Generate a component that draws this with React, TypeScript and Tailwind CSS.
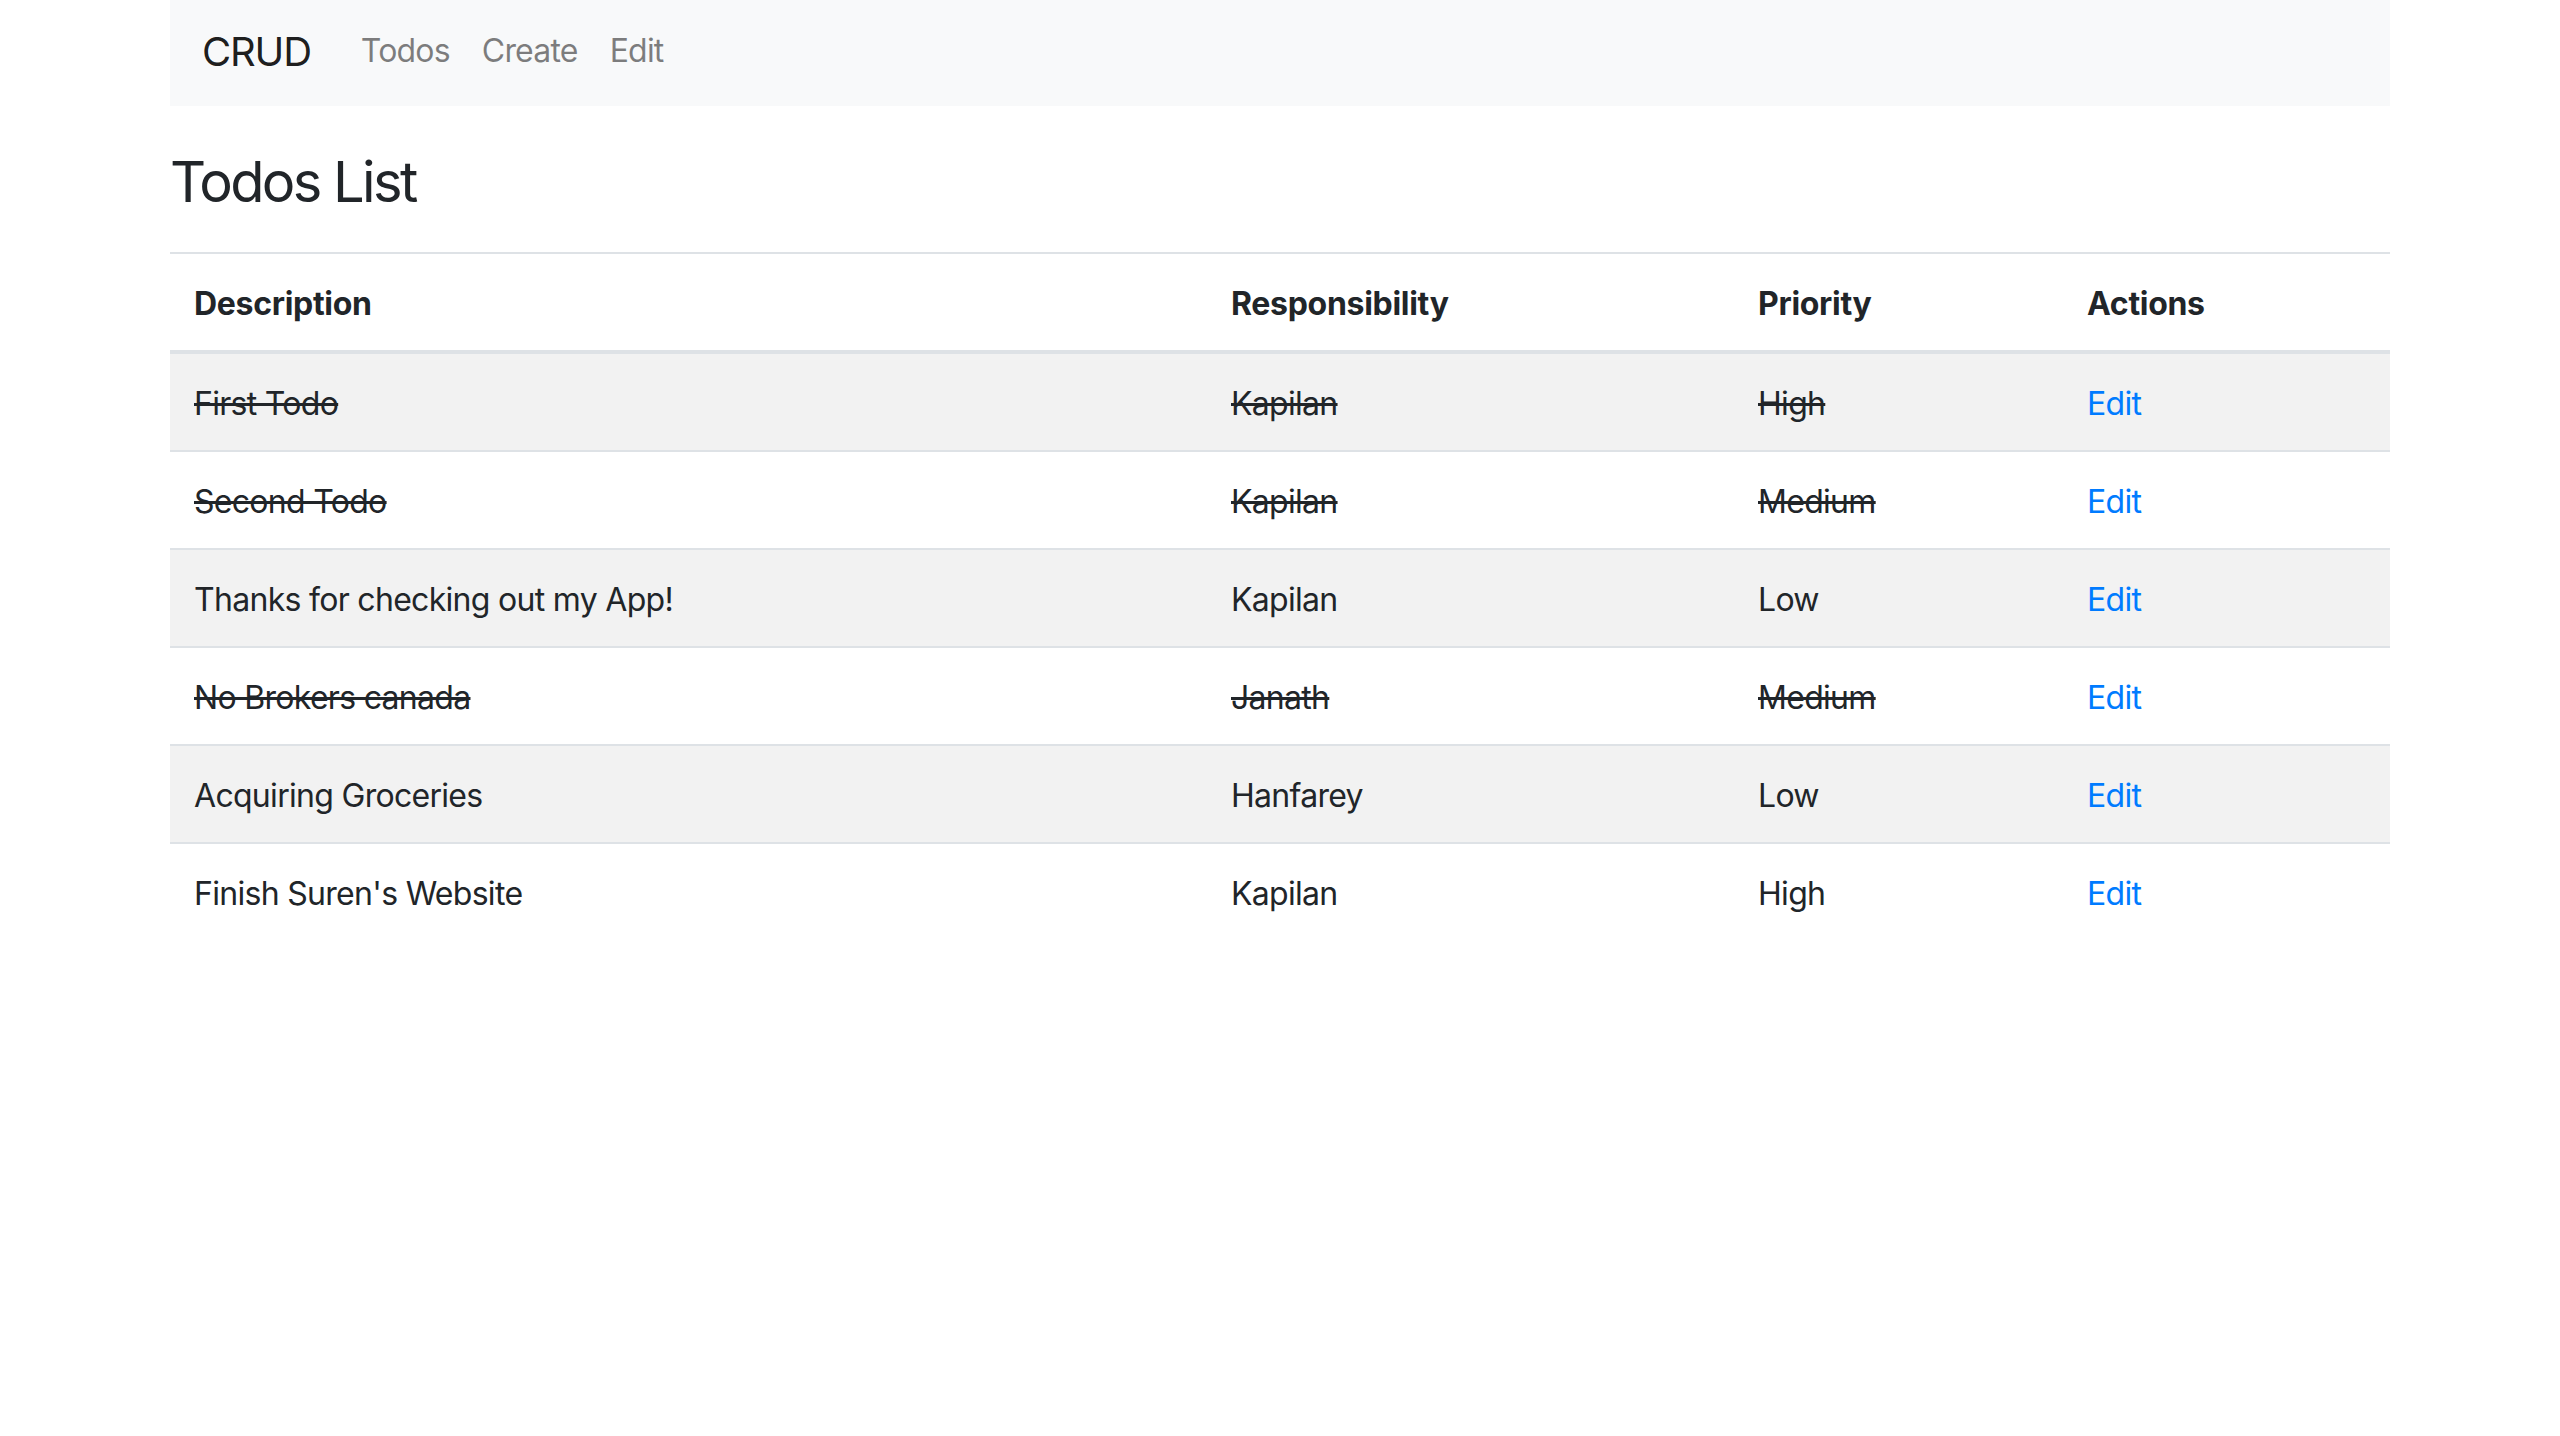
import React from 'react'

type Todo = {
  description: string
  responsible: string
  priority: string
  completed: boolean
}

const todos: Todo[] = [
  { description: 'First Todo', responsible: 'Kapilan', priority: 'High', completed: true },
  { description: 'Second Todo', responsible: 'Kapilan', priority: 'Medium', completed: true },
  { description: 'Thanks for checking out my App!', responsible: 'Kapilan', priority: 'Low', completed: false },
  { description: 'No Brokers canada', responsible: 'Janath', priority: 'Medium', completed: true },
  { description: 'Acquiring Groceries', responsible: 'Hanfarey', priority: 'Low', completed: false },
  { description: "Finish Suren's Website", responsible: 'Kapilan', priority: 'High', completed: false },
]

function Navbar() {
  return (
    <nav className="flex h-[106px] items-center bg-[#f8f9fa] px-[32px]">
      <a href="#" className="mr-[34px] mb-[2px] text-[40px] leading-[60px] tracking-[-1.2px] text-[rgba(0,0,0,0.9)]">
        CRUD
      </a>
      <ul className="mb-[5px] flex">
        {['Todos', 'Create', 'Edit'].map((label) => (
          <li key={label}>
            <a href="#" className="block px-[16px] text-[32px] leading-[48px] tracking-[-0.8px] text-[rgba(0,0,0,0.5)]">
              {label}
            </a>
          </li>
        ))}
      </ul>
    </nav>
  )
}

function TodoRow({ todo, index }: { todo: Todo; index: number }) {
  const striped = index % 2 === 0
  const border = index === 0 ? '' : 'border-t-2 border-[#dee2e6]'
  const done = todo.completed ? 'line-through' : ''
  return (
    <tr className={striped ? 'bg-[#f2f2f2]' : ''}>
      <td className={`${border} ${done} px-[24px] pt-[26px] pb-[22px]`}>{todo.description}</td>
      <td className={`${border} ${done} px-[24px] pt-[26px] pb-[22px]`}>{todo.responsible}</td>
      <td className={`${border} ${done} px-[24px] pt-[26px] pb-[22px]`}>{todo.priority}</td>
      <td className={`${border} px-[24px] pt-[26px] pb-[22px]`}>
        <a href="#" className="text-[#007bff]">Edit</a>
      </td>
    </tr>
  )
}

export default function App() {
  return (
    <div
      className="min-h-screen w-full bg-white text-[32px] leading-[48px] tracking-[-0.7px] text-[#212529]"
      style={{ fontFamily: 'Inter, "Liberation Sans", sans-serif' }}
    >
      <div className="mx-auto w-[2220px]">
        <Navbar />

        <h3 className="mt-[43px] text-[56px] font-normal leading-[67px] tracking-[-2.6px]">Todos List</h3>

        <table className="mt-[36px] w-full table-fixed border-separate border-spacing-0 text-left">
          <colgroup>
            <col className="w-[1037px]" />
            <col className="w-[527px]" />
            <col className="w-[329px]" />
            <col className="w-[327px]" />
          </colgroup>
          <thead>
            <tr>
              {['Description', 'Responsibility', 'Priority', 'Actions'].map((h) => (
                <th
                  key={h}
                  className="border-t-2 border-b-4 border-[#dee2e6] px-[24px] pt-[26px] pb-[22px] font-bold tracking-[-0.3px]"
                >
                  {h}
                </th>
              ))}
            </tr>
          </thead>
          <tbody>
            {todos.map((todo, i) => (
              <TodoRow key={todo.description} todo={todo} index={i} />
            ))}
          </tbody>
        </table>
      </div>
    </div>
  )
}
